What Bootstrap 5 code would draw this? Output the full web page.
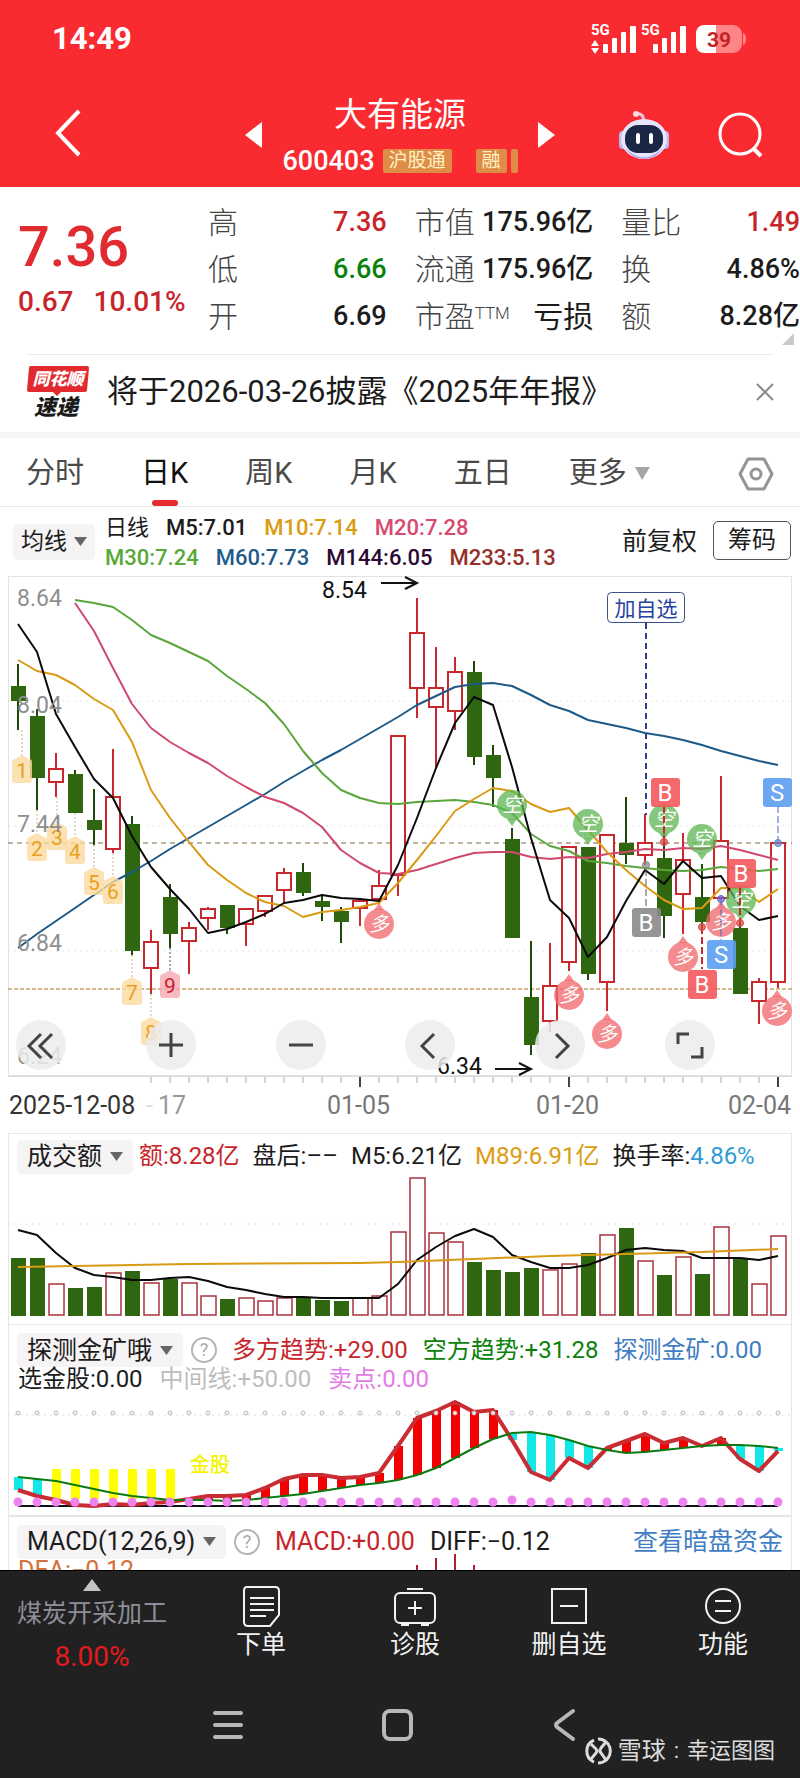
<!DOCTYPE html>
<html lang="zh-CN">
<head>
<meta charset="utf-8">
<meta name="viewport" content="width=device-width, initial-scale=1">
<title>大有能源 600403</title>
<link href="https://cdn.jsdelivr.net/npm/bootstrap@5.3.0/dist/css/bootstrap.min.css" rel="stylesheet">
<style>
  body{font-family:Roboto,"Noto Sans CJK SC",sans-serif;color:#1c1c1c;background:#fff;line-height:1.2}
  svg{display:block;overflow:visible}
  svg text{font-family:Roboto,"Noto Sans CJK SC",sans-serif}
  button,select{font-family:inherit;color:inherit;border:0;background:none;padding:0}
  .c-red{color:#c8252b}.c-green{color:#0a820a}.c-gold{color:#dc9c12}.c-pink{color:#d84a6e}
  .c-lime{color:#58a838}.c-blue{color:#1f5c8c}.c-plum{color:#2c0a34}.c-brown{color:#93302a}
  .c-sky{color:#2e9bd6}.c-steel{color:#3f7dc4}.c-mute{color:#bdbdbd}.c-violet{color:#e27be8}

  .app-head{background:#f92b31;color:#fff;height:187px}
  .status{height:78px;padding:0 54px 0 52px}
  .clock{font-size:31px;font-weight:700}
  .title-row{display:grid;grid-template-columns:1fr 311px 1fr;height:109px;padding:5px 0 0}
  .title-row .side-l{padding-left:54px}
  .title-row .side-r{padding-right:37px}
  .stock-name{font-size:33px;line-height:40px;font-weight:400}
  .code-row{padding-top:11px}
  .stock-code{font-size:27px;font-weight:500;line-height:30px}
  .mkt{background:#df8c46;color:#fff3c8;font-size:19px;line-height:24px;height:24px;border-radius:2px;padding:0 6px}
  .mkt-cut{width:7px}

  .quote{display:grid;grid-template-columns:162px 1fr 1fr 1fr;column-gap:28px;padding:12px 0 14px 18px;position:relative}
  .price{font-size:56px;line-height:64px;font-weight:500;color:#e02b30;padding-top:16px}
  .change{font-size:28px;line-height:46px;font-weight:500;gap:20px;white-space:nowrap}
  .stat{height:47px;font-size:27px;font-weight:500;white-space:nowrap}
  .stat span:first-child{font-size:30px;font-weight:300;color:#444}
  .stat sup{font-size:17px;top:-8px}
  .stat .word{font-size:30px;font-weight:400}
  .fold{position:absolute;right:6px;bottom:9px}

  .news{margin:0 26px;height:78px;border-top:1px solid #ececec;padding-bottom:4px}
  .news a{font-size:31px;color:#1c1c1c;text-decoration:none;margin-left:17px;white-space:nowrap}
  .band{height:6px;background:#f5f5f5}

  .tabs{height:69px;padding:0 26px;border-bottom:1px solid #e8e8e8;gap:57px;font-size:29px;color:#4a4a4a}
  .tabs button{height:68px;position:relative;white-space:nowrap;padding-top:3px}
  .tabs .on{color:#111}
  .tabs .on::after{content:"";position:absolute;left:50%;bottom:0;width:26px;height:6px;margin-left:-13px;border-radius:3px;background:#e62a2e}

  .pick{appearance:none;font-size:25px;line-height:33px;height:34px;border-radius:5px;padding:0 30px 0 10px;
    background:#f5f3f4 url("data:image/svg+xml,%3Csvg xmlns='http://www.w3.org/2000/svg' width='13' height='9'%3E%3Cpath d='M0 0h13L6.500 9z' fill='%23666'/%3E%3C/svg%3E") no-repeat right 10px center}
  .ma{height:69px;padding:0 9px 0 13px}
  .ma .pick{font-size:23px;height:36px;padding:0 28px 0 8px;background-position:right 8px center}
  .ma-list{font-size:22px;line-height:30px;font-weight:500;margin-left:10px;white-space:nowrap;padding-top:2px}
  .ma-list div{gap:17px}
  .adj{font-size:25px;white-space:nowrap}
  .chip{font-size:24px;width:78px;height:39px;border:1px solid #555;border-radius:5px;margin-bottom:3px}

  .plot{margin:0 8px}
  .plot svg{width:100%;height:auto}
  .tools{position:absolute;left:0;right:0;bottom:6px;padding:0 77px 0 8px}
  .tools button{width:50px;height:50px;border-radius:50%;background:rgba(236,236,236,.85)}
  .tools svg{width:50px;height:50px}
  .panel{margin:0 8px;border:1px solid #e6e6e6}
  .panel svg.fig{width:100%;height:auto}
  .legend-row{padding:0 8px;height:42px;font-size:24px;gap:15px;white-space:nowrap}
  .legend-row.tight{gap:13px;padding-top:3px}
  .legend-row .pick{margin-right:-7px}
  .legend-row a{color:#3f7dc4;text-decoration:none}
  .gold{height:191px}
  .sub-row{font-size:24px;line-height:24px;padding-left:9px;gap:17px}
  .macd{height:54px;overflow:hidden;position:relative;border-bottom:0}
  .macd .legend-row{font-size:25px;height:49px}
  .macd .dea{font-size:25px;line-height:25px;color:#d4703c;margin:-8px 0 0 9px}
  .macd .stems{position:absolute;top:0;left:0;width:100%}
  .help{width:26px;height:26px;border:2px solid #b4b4b4;border-radius:50%;color:#a8a8a8;font-size:18px;line-height:22px;text-align:center}

  .dock{background:#212121;color:#f2f2f2;border-top:1px solid #000}
  .acts{display:grid;grid-template-columns:184px repeat(4,1fr);height:110px}
  .acts button{font-size:25px;line-height:30px;display:flex;flex-direction:column;align-items:center;padding-top:14px}
  .acts svg{margin-bottom:1px}
  .acts .sector{color:#8e8e98;padding-top:8px}
  .sector span{line-height:43px}
  .sector .pct{font-size:28px;color:#e41a1c}
  .sysnav{height:98px;position:relative}
  .sysnav .keys{padding:26px 0 0 212px;gap:137px}
  .owner{position:absolute;right:25px;top:54px;font-size:22px;color:#dcdcdc;line-height:32px}
  .owner .brand{font-size:24px}
</style>
</head>
<body>
<header class="app-head">
  <div class="status d-flex justify-content-between align-items-center">
    <span class="clock">14:49</span>
    <svg width="156" height="34" viewBox="589 22 156 34" fill="#fff">
      <g font-size="15" font-weight="700"><text x="590" y="35">5G</text><text x="640" y="35">5G</text></g>
      <path d="M590 46l4-6 4 6zM590 48l4 6 4-6z"/>
      <g id="bars"><rect x="602" y="44" width="5" height="9" rx="1"/><rect x="611" y="38" width="5" height="15" rx="1"/><rect x="620" y="32" width="5" height="21" rx="1"/><rect x="629" y="26" width="6" height="27" rx="1"/></g>
      <use href="#bars" x="50"/>
      <rect x="695" y="25" width="46" height="28" rx="9" fill="#ff8587"/><path d="M742 33q3 1 3 6t-3 6z" fill="#ff8587"/>
      <path d="M704 25h11v28h-11q-9 0-9-9V34q0-9 9-9z"/>
      <text x="718" y="47" font-size="21" font-weight="700" text-anchor="middle" fill="#c22428">39</text>
    </svg>
  </div>
  <div class="title-row align-items-center">
    <div class="side-l"><button aria-label="返回"><svg width="30" height="48" viewBox="0 0 30 48" fill="none" stroke="#fff" stroke-width="4"><path d="M25 2L4 24l21 22"/></svg></button></div>
    <div class="d-flex justify-content-between align-items-center">
      <button aria-label="上一只"><svg width="17" height="26" viewBox="0 0 17 26" fill="#fff"><path d="M17 0v26L0 13z"/></svg></button>
      <div class="text-center">
        <div class="stock-name">大有能源</div>
        <div class="code-row d-flex align-items-center">
          <span class="stock-code">600403</span><span class="mkt ms-2">沪股通</span><span class="mkt ms-4">融</span><span class="mkt mkt-cut ms-1 px-0"></span>
        </div>
      </div>
      <button aria-label="下一只"><svg width="17" height="26" viewBox="0 0 17 26" fill="#fff"><path d="M0 0v26l17-13z"/></svg></button>
    </div>
    <div class="side-r d-flex justify-content-end align-items-center">
      <button aria-label="智能助手"><svg width="52" height="52" viewBox="0 0 52 52">
        <path d="M25 12q2-6-6-8" fill="none" stroke="#f3c3d8" stroke-width="3"/><circle cx="18" cy="5" r="3" fill="#ffd9e6"/>
        <rect x="1" y="22" width="9" height="18" rx="4" fill="#b9b9f4"/><rect x="42" y="22" width="9" height="18" rx="4" fill="#b9b9f4"/>
        <ellipse cx="26" cy="30" rx="23" ry="20" fill="#e6e6ff"/><path d="M7 39q19 19 38 0-7 11-19 11T7 39z" fill="#a9a5ee"/>
        <rect x="7" y="16" width="38" height="28" rx="13" fill="#1b2747"/><rect x="18" y="24" width="4" height="11" rx="2" fill="#fff"/><rect x="31" y="24" width="4" height="11" rx="2" fill="#fff"/></svg></button>
      <button aria-label="搜索" class="ms-5"><svg width="45" height="46" viewBox="0 0 45 46" fill="none" stroke="#fff" stroke-width="3"><circle cx="22" cy="22" r="20"/><path d="M35 36l8 8" stroke-width="4"/></svg></button>
    </div>
  </div>
</header>

<main>
<section class="quote">
  <div>
    <div class="price">7.36</div>
    <div class="change c-red d-flex"><span>0.67</span><span>10.01%</span></div>
  </div>
  <div>
    <div class="stat d-flex justify-content-between align-items-center"><span>高</span><span class="c-red">7.36</span></div>
    <div class="stat d-flex justify-content-between align-items-center"><span>低</span><span class="c-green">6.66</span></div>
    <div class="stat d-flex justify-content-between align-items-center"><span>开</span><span>6.69</span></div>
  </div>
  <div>
    <div class="stat d-flex justify-content-between align-items-center"><span>市值</span><span>175.96亿</span></div>
    <div class="stat d-flex justify-content-between align-items-center"><span>流通</span><span>175.96亿</span></div>
    <div class="stat d-flex justify-content-between align-items-center"><span>市盈<sup>TTM</sup></span><span class="word">亏损</span></div>
  </div>
  <div>
    <div class="stat d-flex justify-content-between align-items-center"><span>量比</span><span class="c-red">1.49</span></div>
    <div class="stat d-flex justify-content-between align-items-center"><span>换</span><span>4.86%</span></div>
    <div class="stat d-flex justify-content-between align-items-center"><span>额</span><span>8.28亿</span></div>
  </div>
  <svg class="fold" width="12" height="12"><path d="M12 0v12H0z" fill="#cacaca"/></svg>
</section>

<section class="news d-flex align-items-center">
  <svg width="64" height="54" viewBox="0 0 64 54">
    <path d="M5 1h56q2 0 2 2l-2 22q0 2-3 2H35l-4 4-4-4H3q-2 0-2-2L3 3q0-2 2-2z" fill="#e1292e"/>
    <text x="32" y="20" font-size="17" font-weight="900" font-style="italic" fill="#fff" text-anchor="middle">同花顺</text>
    <text x="30" y="50" font-size="22" font-weight="900" font-style="italic" fill="#1a1a1a" text-anchor="middle">速递</text>
  </svg>
  <a href="#">将于2026-03-26披露《2025年年报》</a>
  <button class="ms-auto" aria-label="关闭"><svg width="18" height="18" fill="none" stroke="#8a8a8a" stroke-width="2"><path d="M1 1l16 16M17 1L1 17"/></svg></button>
</section>
<div class="band"></div>

<nav class="tabs d-flex align-items-center">
  <button>分时</button><button class="on">日K</button><button>周K</button><button>月K</button><button>五日</button>
  <button class="d-flex align-items-center">更多<svg class="ms-2" width="15" height="13"><path d="M0 0h15L7 13z" fill="#a6a6a6"/></svg></button>
  <button class="ms-auto" aria-label="设置"><svg class="m-auto" width="36" height="34" viewBox="0 0 36 34" fill="none" stroke="#949494" stroke-width="3" stroke-linejoin="round"><path d="M10 2h16l8 15-8 15H10L2 17z"/><circle cx="18" cy="17" r="5"/></svg></button>
</nav>

<section class="ma d-flex align-items-center">
  <select class="pick" aria-label="主图指标"><option>均线</option></select>
  <div class="ma-list">
    <div class="d-flex"><span class="fw-normal">日线</span><span>M5:7.01</span><span class="c-gold">M10:7.14</span><span class="c-pink">M20:7.28</span></div>
    <div class="d-flex"><span class="c-lime">M30:7.24</span><span class="c-blue">M60:7.73</span><span class="c-plum">M144:6.05</span><span class="c-brown">M233:5.13</span></div>
  </div>
  <span class="adj ms-auto">前复权</span>
  <button class="chip ms-3">筹码</button>
</section>

<section class="plot">
  <div class="position-relative">
    <svg id="kline" viewBox="8 576 784 500" role="img" aria-label="日K线图"></svg>
    <div class="tools d-flex justify-content-between">
      <button aria-label="更早"><svg fill="none" stroke="#444" stroke-width="3"><path d="M25 14L13 26l12 12M36 14L24 26l12 12"/></svg></button>
      <button aria-label="放大"><svg fill="none" stroke="#444" stroke-width="3"><path d="M13 25h24M25 13v24"/></svg></button>
      <button aria-label="缩小"><svg fill="none" stroke="#444" stroke-width="3"><path d="M13 25h24"/></svg></button>
      <button aria-label="左移"><svg fill="none" stroke="#444" stroke-width="3"><path d="M29 14L17 26l12 12"/></svg></button>
      <button aria-label="右移"><svg fill="none" stroke="#444" stroke-width="3"><path d="M21 14l12 12-12 12"/></svg></button>
      <button aria-label="全屏"><svg fill="none" stroke="#444" stroke-width="3"><path d="M13 24V14h11M37 27v10H26"/></svg></button>
    </div>
  </div>
  <svg id="axis" viewBox="8 1076 784 57"></svg>
</section>

<section class="panel">
  <div class="legend-row tight d-flex align-items-center">
    <select class="pick" aria-label="副图一"><option>成交额</option></select>
    <span class="c-red">额:8.28亿</span><span>盘后:––</span><span>M5:6.21亿</span><span class="c-gold">M89:6.91亿</span><span>换手率:<span class="c-sky">4.86%</span></span>
  </div>
  <svg id="vol" class="fig" viewBox="9 1176 782 148"></svg>
</section>

<section class="panel gold border-top-0">
  <div class="legend-row d-flex align-items-center pt-2">
    <select class="pick" aria-label="副图二"><option>探测金矿哦</option></select>
    <button class="help" aria-label="说明">?</button>
    <span class="c-red">多方趋势:+29.00</span><span class="c-green">空方趋势:+31.28</span><span class="c-steel">探测金矿:0.00</span>
  </div>
  <div class="sub-row d-flex"><span>选金股:0.00</span><span class="c-mute">中间线:+50.00</span><span class="c-violet">卖点:0.00</span></div>
  <svg id="gold" class="fig" viewBox="9 1391 782 118"></svg>
</section>

<section class="panel macd">
  <div class="legend-row d-flex align-items-center">
    <select class="pick" aria-label="副图三"><option>MACD(12,26,9)</option></select>
    <button class="help" aria-label="说明">?</button>
    <span class="c-red">MACD:+0.00</span><span>DIFF:−0.12</span>
    <a href="#" class="ms-auto">查看暗盘资金</a>
  </div>
  <div class="dea">DEA:−0.12</div>
  <svg class="stems" viewBox="9 1516 782 54" stroke="#b3202a" stroke-width="2"><path d="M417 1564v8M436 1557v14M455 1553v18M474 1564v8"/></svg>
</section>
</main>

<footer class="dock">
  <div class="acts">
    <button class="sector"><svg width="18" height="12"><path d="M9 0l9 12H0z" fill="#c4c4c4"/></svg><span>煤炭开采加工</span><span class="pct">8.00%</span></button>
    <button><svg width="38" height="44" viewBox="0 0 38 44" fill="none" stroke="#f2f2f2" stroke-width="2"><path d="M5 2h28q4 0 4 4v24l-9 11H6q-4 0-4-4V6q0-4 3-4z"/><path d="M8 13h24M8 19h24M8 25h24M8 31h16"/></svg>下单</button>
    <button><svg width="44" height="44" viewBox="0 0 44 44" fill="none" stroke="#f2f2f2" stroke-width="2"><rect x="2" y="8" width="40" height="30" rx="5"/><path d="M14 4h16M8 40h8M28 40h8M15 23h14M22 16v14" /></svg>诊股</button>
    <button><svg width="40" height="44" viewBox="0 0 40 44" fill="none" stroke="#f2f2f2" stroke-width="2"><rect x="3" y="4" width="34" height="34"/><path d="M11 21h18"/></svg>删自选</button>
    <button><svg width="40" height="44" viewBox="0 0 40 44" fill="none" stroke="#f2f2f2" stroke-width="2"><circle cx="20" cy="21" r="17"/><path d="M12 16h16M12 26h16"/></svg>功能</button>
  </div>
  <div class="sysnav">
    <div class="keys d-flex align-items-center">
      <button aria-label="最近任务"><svg width="32" height="36" stroke="#b8b8b8" stroke-width="4" stroke-linecap="round"><path d="M3 6h26M3 18h26M3 30h26"/></svg></button>
      <button aria-label="主屏幕"><svg width="32" height="36" fill="none" stroke="#b8b8b8" stroke-width="4"><rect x="3" y="4" width="27" height="28" rx="6"/></svg></button>
      <button aria-label="后退"><svg width="32" height="36" fill="none" stroke="#b8b8b8" stroke-width="4" stroke-linecap="round" stroke-linejoin="round"><path d="M23 4L7 16q-2 2 0 4l16 12"/></svg></button>
    </div>
    <div class="owner d-flex align-items-center">
      <svg class="me-1" width="29" height="29" viewBox="0 0 29 29" fill="none" stroke="#dcdcdc" stroke-width="3"><path d="M9 3A12 12 0 0 0 9 25M13 2A12 12 0 0 1 20 24"/><path d="M6 7l5 5q2 2 0 4l-5 6M21 5l-5 6q-2 3 0 5l5 7q-3 3-8 3"/></svg>
      <span class="brand">雪球</span><span class="px-2">:</span><span>幸运图图</span>
    </div>
  </div>
</footer>

<script src="https://cdn.jsdelivr.net/npm/bootstrap@5.3.0/dist/js/bootstrap.bundle.min.js"></script>
<script>
const X = i => 18 + 19 * i;
const RED = '#c9282d', GREEN = '#2f6610';
const pts = (a, s = 0) => a.map((v, i) => X(i + s) + ',' + v).join(' ');
const line = (p, c, w = 2) => `<polyline points="${p}" fill="none" stroke="${c}" stroke-width="${w}" stroke-linejoin="round"/>`;
const hline = (y, c, dash) => `<path d="M8 ${y}H792" stroke="${c}" stroke-dasharray="${dash}"/>`;

/* one row per day: high, body top, body bottom, low, 1 = up */
const days = [[664,686,701,730,0],[709,716,778,810,0],[753,769,782,797,1],[770,774,813,813,0],[789,820,830,845,0],[749,797,849,853,1],[816,824,951,955,0],[930,942,968,994,1],[884,897,934,948,0],[922,928,941,974,1],[907,909,918,930,1],[905,905,928,934,0],[909,909,924,946,1],[896,896,911,917,1],[868,873,890,904,1],[863,872,893,896,0],[895,901,907,921,0],[907,911,922,943,0],[900,901,908,926,1],[870,886,899,903,1],[736,736,875,896,1],[598,633,688,718,1],[647,688,707,767,1],[657,672,711,730,1],[661,672,757,765,0],[745,755,778,807,0],[828,839,938,938,0],[941,997,1045,1055,0],[943,986,1021,1032,1],[846,847,962,971,1],[847,847,974,980,0],[834,835,982,1011,1],[797,843,855,864,0],[814,843,855,865,1],[820,858,916,938,0],[833,860,894,934,1],[864,897,922,928,0],[776,841,898,898,1],[920,928,994,994,0],[978,982,1001,1024,1],[842,843,982,988,1]];
const m5 = [624,652,714,747,779,798,836,867,889,909,933,929,922,914,903,900,895,898,899,901,865,818,768,723,697,705,767,838,900,918,957,937,901,870,884,861,878,876,906,920,916];
const m10 = [660,671,675,685,699,710,742,790,818,842,865,880,893,902,906,917,912,910,907,903,883,860,836,811,799,788,791,804,812,808,830,852,870,886,900,909,908,888,888,902,889];
const m20 = [603,631,668,704,728,742,753,763,776,787,797,803,813,827,850,863,873,874,870,864,858,853,852,852,857,859,857,858,854,852,849,850,848,849,846,850,855,860];
const m30 = [600,603,607,620,635,643,652,661,676,689,703,724,751,773,790,798,803,804,802,801,800,802,805,813,834,846,851,861,863,866,868,870,871,870,867,869,871,869];
const m60 = [948,934,921,908,895,882,872,861,849,838,827,816,805,794,782,771,760,750,739,728,717,705,696,687,684,683,686,695,705,711,720,724,728,733,736,740,745,751,756,761,765];

let s = '<rect x="8.500" y="576.500" width="783" height="499" fill="#fff" stroke="#e2e2e2"/>';
s += [701,826,951].map(y => hline(y, '#e3e3e3', '2 4')).join('');
s += hline(843, '#7c6440', '5 4') + hline(989, '#a87418', '4 2');
days.forEach(([h, t, b, l, up], i) => {
  const x = X(i), c = up ? RED : GREEN;
  s += `<path d="M${x} ${h}V${t}M${x} ${b}V${l}" stroke="${up ? c : '#1d4a08'}" stroke-width="2"/>`;
  s += up ? `<rect x="${x - 7}" y="${t}" width="14" height="${b - t}" fill="#fff" stroke="${c}" stroke-width="2"/>`
          : `<rect x="${x - 7}" y="${t}" width="15" height="${b - t}" fill="${c}"/>`;
});
s += line(pts(m60), '#1d5a88') + line(pts(m30, 3), '#5aa63c') + line(pts(m20, 3), '#cf4a6c') + line(pts(m10), '#d99a14') + line(pts(m5), '#0a0a0a');

/* numbered sequence tags */
[[22,756,730,1],[37,834,810,2],[57,823,797,3],[75,837,813,4],[94,868,845,5],[113,877,853,6],[132,978,955,7],[151,1018,994,8],[170,971,948,9]].forEach(([x, y, from, n]) => {
  const hot = n === 9;
  s += `<path d="M${x} ${from}V${y}" stroke="${hot ? '#555' : '#c9b48a'}" stroke-dasharray="2 2"/>`;
  s += `<path d="M${x - 7} ${y + 3}L${x} ${y - 1}l7 4q3 0 3 3v18q0 3-3 3h-14q-3 0-3-3v-18q0-3 3-3z" fill="${hot ? '#f6a9b2' : '#fbdb9f'}" fill-opacity=".8"/>`;
  s += `<text x="${x}" y="${y + 22}" font-size="21" text-anchor="middle" fill="${hot ? '#c8202c' : '#e8a01e'}">${n}</text>`;
});

/* long / short pins */
const pin = (x, y, up) => `<path d="M${x - 5} ${y + (up ? -14 : 14)}L${x} ${y + (up ? -21 : 21)}l5 ${up ? 7 : -7}z" fill="${up ? '#f0666a' : '#5cb552'}" fill-opacity=".75"/><circle cx="${x}" cy="${y}" r="15" fill="${up ? '#f0666a' : '#5cb552'}" fill-opacity=".75"/><text x="${x}" y="${y + 7}" font-size="20" font-style="italic" text-anchor="middle" fill="#fff">${up ? '多' : '空'}</text>`;
s += [[379,924],[569,995],[607,1034],[683,957],[721,922],[777,1011]].map(p => pin(...p, true)).join('');
s += [[512,805],[588,824],[664,819],[702,839],[741,900]].map(p => pin(...p, false)).join('');

/* add-to-watchlist marker and trade flags */
s += '<path d="M646 623V815" stroke="#2b3f86" stroke-width="2" stroke-dasharray="6 4"/><rect x="607.500" y="592.500" width="77" height="30" rx="4" fill="#fff" stroke="#3a4f8a"/><text x="646" y="616" font-size="21" text-anchor="middle" fill="#2743a0">加自选</text>';
s += '<g fill="none" stroke-dasharray="7 3"><path d="M646 869V907" stroke="#555"/><path d="M664 806V842M702 927V969M740 888V923" stroke="#c9282d" stroke-width="2"/><path d="M721 899V940M778 806V843" stroke="#4a66c0"/></g>';
s += [[646,865,'#888'],[664,842,'#d44'],[702,927,'#d44'],[721,899,'#66c'],[740,923,'#d44'],[778,843,'#68c']].map(([x, y, c]) => `<circle cx="${x}" cy="${y}" r="3.500" fill="${c}" fill-opacity=".7" stroke="${c}"/>`).join('');
s += [[665,792,'B','#f4585c'],[646,922,'B','#8a8a8a'],[741,873,'B','#f4585c'],[702,984,'B','#f4585c'],[777,792,'S','#5c9ff0'],[721,954,'S','#5c9ff0']].map(([x, y, t, c]) => `<rect x="${x - 14}" y="${y - 14}" width="29" height="29" rx="3" fill="${c}" fill-opacity=".9"/><text x="${x}" y="${y + 9}" font-size="24" text-anchor="middle" fill="#fff">${t}</text>`).join('');

s += [['8.64',606],['8.04',713],['7.44',832],['6.84',951],['6.24',1064]].map(([t, y]) => `<text x="17" y="${y}" font-size="23" fill="#8f8f8f">${t}</text>`).join('');
s += '<g font-size="23" fill="#111"><text x="322" y="598">8.54</text><text x="437" y="1074">6.34</text></g><g fill="none" stroke="#111" stroke-width="2"><path d="M381 583h36M405 577l12 6-12 6M495 1069h36M519 1063l12 6-12 6"/></g>';
kline.innerHTML = s;

/* date axis */
s = '<path d="M8 1076.500H792" stroke="#d8d8d8"/>';
for (let i = 7; i <= 40; i++) {
  const big = i === 18 || i === 29 || i === 40;
  s += `<path d="M${X(i)} 1077v${big ? 10 : 6}" stroke="${big ? '#444' : '#aaa'}" stroke-width="${big ? 2 : 1}"/>`;
}
s += '<g font-size="25" fill="#777"><text x="9" y="1114" fill="#333">2025-12-08</text><text x="146" y="1114" fill="#ddd">-</text><text x="158" y="1114" fill="#999">17</text><text x="327" y="1114">01-05</text><text x="536" y="1114">01-20</text><text x="791" y="1114" text-anchor="end">02-04</text></g>';
axis.innerHTML = s;

/* turnover */
const vols = [1258,1258,1284,1288,1287,1273,1271,1283,1279,1283,1296,1299,1298,1301,1298,1298,1300,1301,1298,1296,1232,1178,1233,1242,1262,1270,1272,1268,1270,1264,1253,1235,1228,1261,1275,1257,1274,1227,1259,1284,1236];
const v5 = [1230,1235,1253,1268,1275,1277,1280,1280,1278,1277,1281,1287,1290,1294,1297,1297,1298,1298,1298,1298,1284,1260,1247,1236,1229,1237,1255,1262,1268,1268,1265,1258,1250,1248,1250,1251,1258,1258,1258,1260,1256];
s = hline(1224, '#e3e3e3', '2 4');
vols.forEach((t, i) => {
  s += days[i][4] ? `<rect x="${X(i) - 7}" y="${t}" width="15" height="${1315 - t}" fill="#fff" stroke="#a8323e" stroke-width="1.500"/>`
                  : `<rect x="${X(i) - 7}" y="${t}" width="15" height="${1316 - t}" fill="${GREEN}"/>`;
});
s += line(pts(v5), '#0a0a0a') + line([[0,1267],[3,1266],[9,1264],[18,1263],[20,1262],[24,1259],[28,1256],[32,1254],[36,1252],[40,1249]].map(([i, v]) => X(i) + ',' + v).join(' '), '#d99a14');
vol.innerHTML = s;

/* trend indicator */
const bull = [1490,1496,1500,1505,1506,1504,1505,1503,1502,1499,1496,1496,1495,1488,1479,1475,1475,1478,1477,1473,1446,1418,1411,1402,1412,1410,1440,1472,1480,1458,1468,1448,1441,1434,1443,1438,1446,1438,1459,1471,1451];
const bear = [1477,1479,1481,1485,1489,1493,1496,1498,1500,1500,1500,1501,1500,1498,1496,1494,1491,1488,1485,1483,1480,1475,1468,1458,1448,1439,1433,1432,1435,1440,1446,1450,1453,1452,1450,1448,1446,1445,1445,1446,1448];
s = hline(1415, '#e0e0e0', '2 4') + '<path d="M18 1506H778" stroke="#10101c" stroke-width="2"/>';
bull.forEach((b, i) => {
  const g = bear[i], x = X(i) - 4;
  if (i >= 2 && i <= 8) s += `<rect x="${x}" y="1469" width="9" height="30" fill="#ff0"/>`;
  else s += `<rect x="${x}" y="${Math.min(b, g)}" width="9" height="${Math.abs(b - g)}" fill="${b < g ? '#f40000' : '#12e8e8'}"/>`;
});
s += line(pts(bull), '#c92c32', 4) + line(pts(bear), '#0c7a12');
for (let i = 0; i <= 40; i++) s += `<circle cx="${X(i)}" cy="1413" r="2" fill="#f4f4f4" stroke="#bbb"/><circle cx="${X(i)}" cy="${i === 26 ? 1500 : 1502}" r="4.500" fill="#ee82ee"/>`;
s += '<text x="190" y="1472" font-size="20" font-weight="500" fill="#f4f400">金股</text>';
gold.innerHTML = s;
</script>
</body>
</html>
